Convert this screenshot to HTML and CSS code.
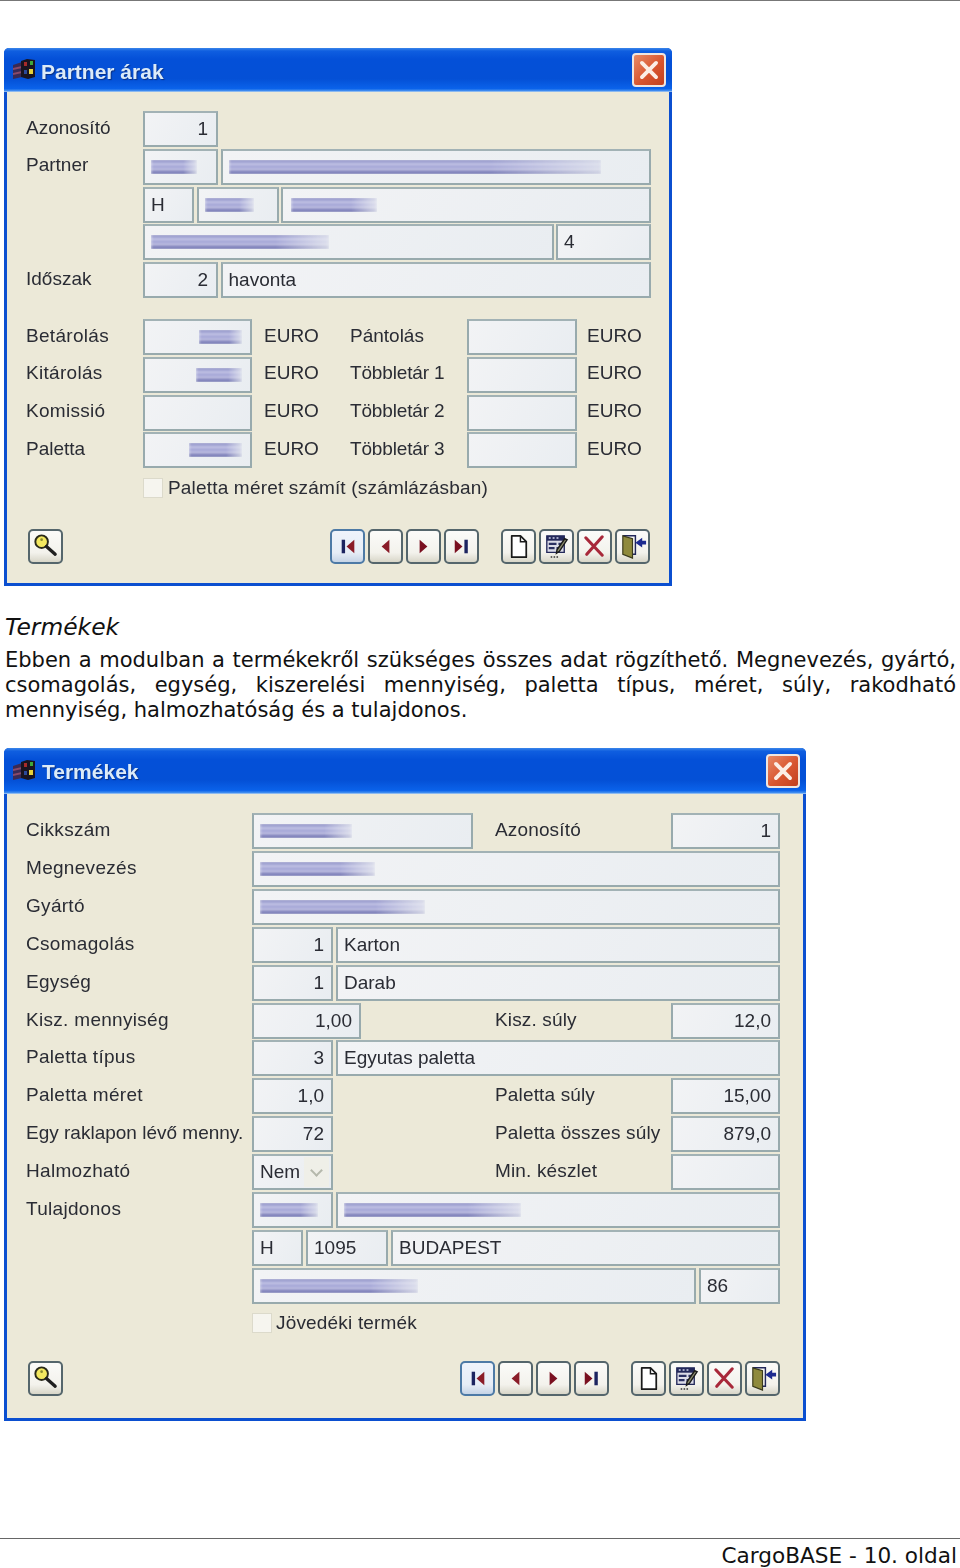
FILE: index.html
```html
<!DOCTYPE html>
<html lang="hu">
<head>
<meta charset="utf-8">
<title>CargoBASE - 10. oldal</title>
<link rel="stylesheet" href="styles.css">
</head>
<body>
<svg class="sprite" xmlns="http://www.w3.org/2000/svg" aria-hidden="true">
  <symbol id="i-app" viewBox="0 0 24 22">
    <path d="M1 7l9-3v15l-9 2z" fill="#3a2a55"/>
    <path d="M1 10l9-2v2l-9 2zM1 15l9-2v2l-9 2z" fill="#8a4a6a"/>
    <path d="M9 3l6-2 8 1v17l-7 2-7-2z" fill="#1a1420"/>
    <path d="M12 4h3v4h-3z" fill="#a82a2a"/>
    <path d="M18 3h3v4h-3z" fill="#3fa83a"/>
    <path d="M17 11h4v5h-4z" fill="#e6d23a"/>
    <path d="M12 12h3v4h-3z" fill="#2c4a9a"/>
  </symbol>
  <symbol id="i-close" viewBox="0 0 34 34">
    <path d="M9 9l16 16M25 9L9 25" stroke="#fbeee6" stroke-width="4.4" stroke-linecap="round" fill="none"/>
  </symbol>
  <symbol id="i-search" viewBox="0 0 32 32">
    <circle cx="12" cy="11" r="6.5" fill="#f3e860" stroke="#2a2a1a" stroke-width="2"/>
    <circle cx="12" cy="9" r="1.4" fill="#8a8a30"/>
    <path d="M17 16l9 8" stroke="#1f1f1f" stroke-width="3.4" stroke-linecap="round"/>
  </symbol>
  <symbol id="i-first" viewBox="0 0 32 32">
    <path d="M10 9h3.500v14H10z" fill="#1c2460"/>
    <path d="M23 9v14l-8-7z" fill="#8a1c28"/>
  </symbol>
  <symbol id="i-prev" viewBox="0 0 32 32">
    <path d="M20 9v14l-8-7z" fill="#8a1c28"/>
  </symbol>
  <symbol id="i-next" viewBox="0 0 32 32">
    <path d="M12 9v14l8-7z" fill="#7a1020"/>
  </symbol>
  <symbol id="i-last" viewBox="0 0 32 32">
    <path d="M9 9v14l8-7z" fill="#7a1020"/>
    <path d="M19 9h3.500v14H19z" fill="#1c2460"/>
  </symbol>
  <symbol id="i-new" viewBox="0 0 32 32">
    <path d="M9 5h9l6 6v16H9z" fill="#fff" stroke="#1a1a1a" stroke-width="1.800" stroke-linejoin="round"/>
    <path d="M18 5v6h6" fill="none" stroke="#1a1a1a" stroke-width="1.500"/>
  </symbol>
  <symbol id="i-edit" viewBox="0 0 32 32">
    <path d="M6 5h18v17H6z" fill="#dcdce8" stroke="#23285a" stroke-width="1.400"/>
    <path d="M6 5h18v5H6z" fill="#23285a"/>
    <path d="M8 6.500h2v1.500H8zM12 6.500h2v1.500h-2zM16 6.500h2v1.500h-2z" fill="#cfd2ea"/>
    <path d="M8 12h8v2.400H8zM18 12h5v2.400h-5zM8 16.500h6v2.400H8zM16 16.500h4v2.400h-4z" fill="#2b3062"/>
    <path d="M10 26h1.600v1.600H10zM13 26h1.600v1.600H13zM16 26h1.600v1.600H16z" fill="#333"/>
    <path d="M27 9l-8 12-3 2 .5-3.500 8-11.500z" fill="#8f8f70" stroke="#1a1a1a" stroke-width="1.500"/>
  </symbol>
  <symbol id="i-del" viewBox="0 0 32 32">
    <path d="M7 7l17 18M24 6L8 24" stroke="#a8283a" stroke-width="3.200" stroke-linecap="round" fill="none"/>
  </symbol>
  <symbol id="i-door" viewBox="0 0 32 32">
    <path d="M6 5h13v19h-3" fill="none" stroke="#23285a" stroke-width="1.500"/>
    <path d="M6 5l10 3v20L6 24z" fill="#8f8a3c" stroke="#3a3a1c" stroke-width="1.200"/>
    <path d="M19 12l7-5v3h4v4h-4v3z" fill="#1c2a90"/>
  </symbol>
</svg>

<hr class="rule">

<section class="win win-a">
  <header class="titlebar">
    <svg class="app"><use href="#i-app"/></svg>
    <span class="title">Partner árak</span>
    <span class="close"><svg><use href="#i-close"/></svg></span>
  </header>
  <div class="client">
    <div class="rows">
      <div class="row"><span class="lab lab-a">Azonosító</span><span class="f w75 num">1</span></div>
      <div class="row"><span class="lab lab-a">Partner</span><span class="f w75"><i class="sm sm46"></i></span><span class="f grow"><i class="sm sm372"></i></span></div>
      <div class="row"><span class="off-a"></span><span class="f w51">H</span><span class="f w82"><i class="sm sm49"></i></span><span class="f grow"><i class="sm sm86"></i></span></div>
      <div class="row"><span class="off-a"></span><span class="f grow"><i class="sm sm178"></i></span><span class="f w95">4</span></div>
      <div class="row"><span class="lab lab-a">Időszak</span><span class="f w75 num">2</span><span class="f grow">havonta</span></div>
    </div>
    <div class="prices">
      <span class="lab wide">Betárolás</span><span class="f num"><i class="sm sm43"></i></span><span class="unit">EURO</span><span class="lab">Pántolás</span><span class="f"></span><span class="unit u2">EURO</span>
      <span class="lab wide">Kitárolás</span><span class="f num"><i class="sm sm46"></i></span><span class="unit">EURO</span><span class="lab narrow">Többletár 1</span><span class="f"></span><span class="unit u2">EURO</span>
      <span class="lab wide">Komissió</span><span class="f"></span><span class="unit">EURO</span><span class="lab narrow">Többletár 2</span><span class="f"></span><span class="unit u2">EURO</span>
      <span class="lab">Paletta</span><span class="f num"><i class="sm sm53"></i></span><span class="unit">EURO</span><span class="lab narrow">Többletár 3</span><span class="f"></span><span class="unit u2">EURO</span>
    </div>
    <div class="check check-a"><span class="box"></span><span>Paletta méret számít (számlázásban)</span></div>
    <div class="tools tools-a">
      <span class="btn"><svg><use href="#i-search"/></svg></span>
      <div class="nav">
        <span class="btn focus"><svg><use href="#i-first"/></svg></span>
        <span class="btn"><svg><use href="#i-prev"/></svg></span>
        <span class="btn"><svg><use href="#i-next"/></svg></span>
        <span class="btn"><svg><use href="#i-last"/></svg></span>
      </div>
      <div class="nav">
        <span class="btn"><svg><use href="#i-new"/></svg></span>
        <span class="btn"><svg><use href="#i-edit"/></svg></span>
        <span class="btn"><svg><use href="#i-del"/></svg></span>
        <span class="btn"><svg><use href="#i-door"/></svg></span>
      </div>
    </div>
  </div>
</section>

<h2 class="heading">Termékek</h2>
<p class="para">Ebben a modulban a termékekről szükséges összes adat rögzíthető. Megnevezés, gyártó, csomagolás, egység, kiszerelési mennyiség, paletta típus, méret, súly, rakodható mennyiség, halmozhatóság és a tulajdonos.</p>

<section class="win win-b">
  <header class="titlebar">
    <svg class="app"><use href="#i-app"/></svg>
    <span class="title">Termékek</span>
    <span class="close"><svg><use href="#i-close"/></svg></span>
  </header>
  <div class="client">
    <div class="rows">
      <div class="row"><span class="lab lab-b">Cikkszám</span><span class="f w221"><i class="sm sm92"></i></span><div class="side"><span class="lab">Azonosító</span><span class="f w109 num">1</span></div></div>
      <div class="row"><span class="lab lab-b">Megnevezés</span><span class="f grow"><i class="sm sm115"></i></span></div>
      <div class="row"><span class="lab lab-b">Gyártó</span><span class="f grow"><i class="sm sm165"></i></span></div>
      <div class="row"><span class="lab lab-b">Csomagolás</span><span class="f w81 num">1</span><span class="f grow">Karton</span></div>
      <div class="row"><span class="lab lab-b">Egység</span><span class="f w81 num">1</span><span class="f grow">Darab</span></div>
      <div class="row"><span class="lab lab-b">Kisz. mennyiség</span><span class="f w109 num">1,00</span><div class="side"><span class="lab">Kisz. súly</span><span class="f w109 num">12,0</span></div></div>
      <div class="row"><span class="lab lab-b">Paletta típus</span><span class="f w81 num">3</span><span class="f grow">Egyutas paletta</span></div>
      <div class="row"><span class="lab lab-b">Paletta méret</span><span class="f w81 num">1,0</span><div class="side"><span class="lab">Paletta súly</span><span class="f w109 num">15,00</span></div></div>
      <div class="row"><span class="lab lab-b tight">Egy raklapon lévő menny.</span><span class="f w81 num">72</span><div class="side"><span class="lab">Paletta összes súly</span><span class="f w109 num">879,0</span></div></div>
      <div class="row"><span class="lab lab-b">Halmozható</span><span class="f w81 sel">Nem<b class="arrow"></b></span><div class="side"><span class="lab">Min. készlet</span><span class="f w109"></span></div></div>
      <div class="row"><span class="lab lab-b">Tulajdonos</span><span class="f w81"><i class="sm sm58"></i></span><span class="f grow"><i class="sm sm177"></i></span></div>
      <div class="row"><span class="off-b"></span><span class="f w51">H</span><span class="f w82">1095</span><span class="f grow">BUDAPEST</span></div>
      <div class="row"><span class="off-b"></span><span class="f grow"><i class="sm sm158"></i></span><span class="f w81">86</span></div>
    </div>
    <div class="check check-b"><span class="box"></span><span>Jövedéki termék</span></div>
    <div class="tools tools-b">
      <span class="btn"><svg><use href="#i-search"/></svg></span>
      <div class="nav">
        <span class="btn focus"><svg><use href="#i-first"/></svg></span>
        <span class="btn"><svg><use href="#i-prev"/></svg></span>
        <span class="btn"><svg><use href="#i-next"/></svg></span>
        <span class="btn"><svg><use href="#i-last"/></svg></span>
      </div>
      <div class="nav">
        <span class="btn"><svg><use href="#i-new"/></svg></span>
        <span class="btn"><svg><use href="#i-edit"/></svg></span>
        <span class="btn"><svg><use href="#i-del"/></svg></span>
        <span class="btn"><svg><use href="#i-door"/></svg></span>
      </div>
    </div>
  </div>
</section>

<footer class="foot">CargoBASE - 10. oldal</footer>
</body>
</html>
```

FILE: styles.css
```css
* { box-sizing: border-box; }
html, body { margin: 0; padding: 0; background: #fff; }
body {
  width: 960px;
  height: 1568px;
  overflow: hidden;
  font-family: "DejaVu Sans", Verdana, sans-serif;
  color: #111;
}
.sprite { display: none; }

.rule {
  margin: 0;
  border: 0;
  height: 1px;
  background: #777;
}

/* window frame */
.win {
  margin-left: 4px;
  border-radius: 5px 5px 0 0;
  background: #0b4fd0;
  padding: 0 3px 3px;
  font-family: "Liberation Sans", Arial, sans-serif;
  font-size: 19px;
  color: #2a2c34;
  filter: blur(0.45px);
}
.win-a { width: 668px; height: 538px; margin-top: 47px; }
.win-b { width: 802px; height: 673px; margin-top: 24.500px; }

.titlebar {
  margin: 0 -3px;
  height: 44px;
  padding-left: 8px;
  display: flex;
  align-items: center;
  border-radius: 5px 5px 0 0;
  background: linear-gradient(#3a86ea 0, #0f5ee0 7%, #0450d8 25%, #0450d6 70%, #0a62ea 92%, #3f8cf0 97%, #b8d4f0 100%);
}
.win-b .titlebar { height: 46px; }
.app { width: 24px; height: 22px; flex: none; margin-top: -3px; }
.title {
  margin-left: 5px;
  padding-top: 4px;
  font-weight: bold;
  font-size: 21px;
  color: #dcebf8;
  text-shadow: 1px 1px 1px #0a2f80;
}
.win-b .title { margin-left: 6px; padding-top: 2px; }
.close {
  margin-left: auto;
  margin-right: 6px;
  width: 34px;
  height: 34px;
  border: 2px solid #f0e6e0;
  border-radius: 4px;
  background: linear-gradient(135deg, #e88a66, #d8552f 55%, #c2401f);
  display: flex;
}
.close svg { width: 30px; height: 30px; }

.client {
  background: #ece9d8;
  padding-left: 19px;
}
.win-a .client { height: 491px; padding-top: 19px; padding-right: 18px; }
.win-b .client { height: 624px; padding-top: 19px; padding-right: 23px; }

/* rows */
.rows { display: flex; flex-direction: column; }
.win-a .rows { gap: 1.75px; }
.win-b .rows { gap: 1.9px; }
.row {
  display: flex;
  align-items: stretch;
  height: 36px;
}
.win-a .row { gap: 2.5px; }
.win-b .row { gap: 3px; }
.lab {
  display: flex;
  align-items: center;
  white-space: nowrap;
  padding-bottom: 3px;
}
.win-b .lab { padding-bottom: 2px; }
.lab-a { width: 114.5px; }
.lab-b { width: 223px; letter-spacing: 0.3px; }
.lab-b.tight { letter-spacing: 0; }
.side .lab { letter-spacing: 0.15px; }
.wide { letter-spacing: 0.3px; }
.narrow { letter-spacing: -0.15px; }
.off-a { width: 114.5px; }
.off-b { width: 223px; }

.f {
  display: flex;
  align-items: center;
  height: 36px;
  padding: 0 6px;
  border: 2px solid #98aaad;
  border-top-color: #a2b2b5;
  background: linear-gradient(120deg, #f2f3f5, #e9edf1);
  white-space: nowrap;
  overflow: hidden;
}
.grow { flex: 1; min-width: 0; }
.num { justify-content: flex-end; padding-right: 8px; }
.win-b .num { padding-right: 7px; }
.w51 { width: 51px; }
.w75 { width: 75px; }
.w81 { width: 81px; }
.w82 { width: 82px; }
.w95 { width: 95px; }
.w109 { width: 109px; flex: none; }
.w221 { width: 221px; }

.side {
  margin-left: auto;
  width: 285px;
  display: flex;
  justify-content: space-between;
}

.sel { padding-right: 2px; justify-content: space-between; }
.arrow {
  width: 25px;
  height: 30px;
  background: #efefe8;
  position: relative;
}
.arrow::after {
  content: "";
  position: absolute;
  left: 8px;
  top: 9px;
  width: 7px;
  height: 7px;
  border-right: 2px solid #b5b8ac;
  border-bottom: 2px solid #b5b8ac;
  transform: rotate(45deg);
}

/* blurred-out values of the reference */
.sm {
  display: block;
  height: 14px;
  flex: none;
  background: linear-gradient(#6f72b6 0 14%, #c4c5e6 14% 44%, #8c8ecb 44% 58%, #cbcce8 58% 80%, #5f62a8 80% 100%);
  filter: blur(1.5px);
  -webkit-mask-image: linear-gradient(to right, #000 70%, rgba(0,0,0,.25) 100%);
  mask-image: linear-gradient(to right, #000 70%, rgba(0,0,0,.25) 100%);
}
.sm43 { width: 43px; }
.sm46 { width: 46px; }
.sm49 { width: 49px; }
.sm53 { width: 53px; }
.sm58 { width: 58px; }
.sm86 { width: 86px; margin-left: 2px; }
.sm92 { width: 92px; }
.sm115 { width: 115px; }
.sm158 { width: 158px; }
.sm165 { width: 165px; }
.sm177 { width: 177px; }
.sm178 { width: 178px; }
.sm372 { width: 372px; }

/* price table */
.prices {
  margin-top: 21px;
  display: grid;
  grid-template-columns: 117px 109px 98px 117px 110px auto;
  grid-auto-rows: 36px;
  row-gap: 1.75px;
}
.unit {
  display: flex;
  align-items: center;
  padding-left: 12px;
  padding-bottom: 3px;
}
.u2 { padding-left: 10px; }

/* checkbox */
.check {
  display: flex;
  align-items: center;
  gap: 5px;
  height: 20px;
  letter-spacing: 0.18px;
}
.check-a { margin: 10px 0 0 117px; }
.check-b { margin: 9px 0 0 226px; gap: 4px; }
.box {
  width: 20px;
  height: 20px;
  flex: none;
  background: #f6f5ef;
  border: 1px solid #dcdacb;
}

/* toolbar */
.tools {
  display: flex;
  align-items: center;
  margin-left: 2px;
  height: 35px;
}
.tools-a { margin-top: 31px; padding-right: 1px; }
.tools-b { margin-top: 28px; padding-right: 0; }
.nav { display: flex; gap: 3px; }
.nav:nth-child(2) { margin-left: auto; }
.nav:nth-child(3) { margin-left: 22px; }
.btn {
  width: 35px;
  height: 35px;
  flex: none;
  display: flex;
  align-items: center;
  justify-content: center;
  border: 2px solid #55666c;
  border-radius: 5px;
  background: linear-gradient(#fbfbf9, #f3f2ec 70%, #d8d6c8);
}
.btn svg { width: 31px; height: 31px; }
.focus {
  border-color: #4d7aa6;
  background: linear-gradient(#eef3fb, #e6edf6 70%, #c6d4e6);
}

/* document text */
.heading {
  margin: 27px 0 0 5px;
  font-size: 23.4px;
  font-weight: normal;
  font-style: italic;
  line-height: 28px;
  color: #111;
}
.para {
  margin: 7px 4px 0 5px;
  font-size: 21px;
  line-height: 25.2px;
  text-align: justify;
  color: #111;
}
.foot {
  margin-top: 117px;
  border-top: 1px solid #666;
  padding-top: 2px;
  padding-right: 3px;
  text-align: right;
  font-size: 21.6px;
  line-height: 29px;
  color: #111;
}
```
